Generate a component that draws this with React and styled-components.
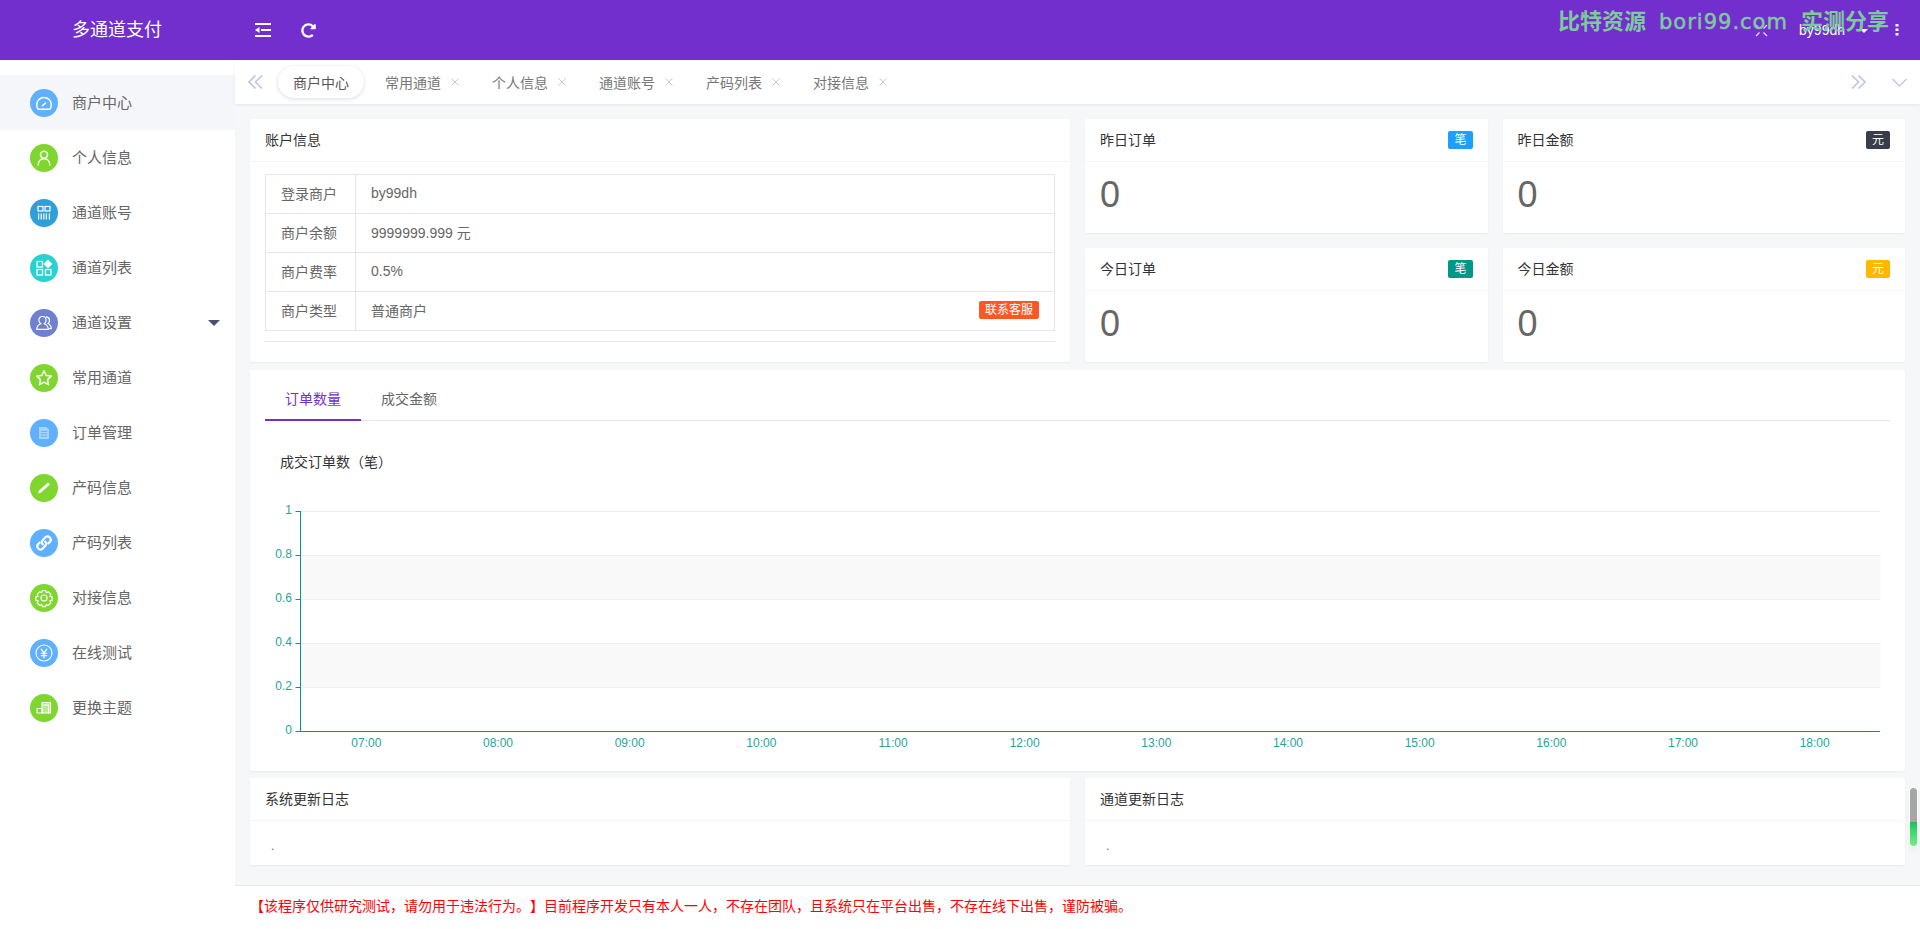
import React from 'react';
import styled, { createGlobalStyle } from 'styled-components';
import { FaRedoAlt } from 'react-icons/fa';

const GlobalStyle = createGlobalStyle`
  html, body {
    margin: 0;
    height: 100%;
    overflow: hidden;
  }
  body {
    font-family: 'Liberation Sans', 'Noto Sans CJK SC', sans-serif;
    font-size: 14px;
    color: #666;
    background: #f5f7f9;
    text-spacing-trim: space-all;
  }
  * {
    box-sizing: border-box;
  }
`;

const Page = styled.div`
  position: relative;
  height: 929px;
  display: flex;
  flex-direction: column;
`;

const Header = styled.header`
  height: 60px;
  flex: none;
  display: flex;
  align-items: center;
  background: #722fcd;
  color: #fff;
`;

const Logo = styled.div`
  width: 235px;
  padding-left: 72px;
  font-size: 18px;
  line-height: 60px;
`;

const HeaderTool = styled.div`
  display: flex;
  align-items: center;
  margin-left: ${({ $left }) => $left}px;
  height: 16px;
`;

const HeaderRight = styled.div`
  margin-left: auto;
  padding: 0 21px 0 0;
  height: 60px;
  display: flex;
  align-items: center;
  font-size: 14px;
`;

const UserName = styled.span`
  margin-left: 31px;
  line-height: 60px;
`;

const UserCaret = styled.span`
  width: 0;
  height: 0;
  margin: 2px 27px 0 15px;
  border-style: solid;
  border-width: 4px 4px 0;
  border-color: #fff transparent transparent;
`;

const Watermark = styled.div`
  position: absolute;
  left: 1558px;
  top: 8px;
  display: flex;
  gap: 13px;
  font-family: 'DejaVu Sans', 'Noto Sans CJK SC', sans-serif;
  font-weight: 700;
  font-size: 22px;
  line-height: 28px;
  color: #7fc99f;
  white-space: nowrap;
`;

const WatermarkLatin = styled.span`
  font-size: 21px;
  font-weight: 400;
  -webkit-text-stroke: 0.5px #7fc99f;
  letter-spacing: 1px;
`;

const Body = styled.div`
  flex: 1;
  display: flex;
  min-height: 0;
`;

const Sidebar = styled.aside`
  width: 235px;
  flex: none;
  padding-top: 15px;
  background: #fff;
`;

const MenuItem = styled.div`
  height: 55px;
  display: flex;
  align-items: center;
  gap: 14px;
  padding: 0 15px 0 30px;
  font-size: 15px;
  color: #666;
  background: ${({ $active }) => ($active ? '#f5f6fa' : 'transparent')};
`;

const MenuLabel = styled.span`
  padding-bottom: 2px;
`;

const MenuIcon = styled.span`
  width: 28px;
  height: 28px;
  flex: none;
  border-radius: 50%;
  background: ${({ $bg }) => $bg};
  display: flex;
`;

const MenuCaret = styled.span`
  margin-left: auto;
  width: 0;
  height: 0;
  border-style: solid;
  border-width: 6px 6px 0;
  border-color: #4a5170 transparent transparent;
`;

const Main = styled.main`
  flex: 1;
  min-width: 0;
  display: flex;
  flex-direction: column;
`;

const TabBar = styled.div`
  height: 44px;
  flex: none;
  padding: 0 13px;
  display: flex;
  align-items: center;
  background: #fff;
  box-shadow: 0 1px 3px rgba(0, 0, 0, 0.07);
`;

const PageTab = styled.div`
  display: flex;
  align-items: center;
  gap: 9px;
  height: 32px;
  padding-bottom: 1px;
  ${({ $active }) => ($active
    ? `
    margin: 0 5px 0 15px;
    padding-left: 15px;
    padding-right: 15px;
    border-radius: 16px;
    color: #555;
    background: #fff;
    box-shadow: 0 1px 4px rgba(0, 0, 0, 0.14);
  `
    : `
    padding-left: 16px;
    padding-right: 16px;
    color: #777;
  `)}
`;

const TabBarEnd = styled.div`
  margin-left: auto;
  display: flex;
  align-items: center;
  gap: 26px;
`;

const Content = styled.div`
  flex: 1;
  min-height: 0;
  padding: 15px 15px 0;
`;

const TopGrid = styled.div`
  display: grid;
  grid-template-columns: 820px 1fr 1fr;
  grid-template-rows: 114px 114px;
  gap: 15px;
  margin-bottom: 8px;
`;

const Card = styled.section`
  background: #fff;
  border-radius: 2px;
  box-shadow: 0 1px 2px rgba(0, 0, 0, 0.05);
  ${({ $tall }) => $tall && 'grid-row: span 2;'}
`;

const CardHeader = styled.div`
  height: 43px;
  padding: 0 15px;
  display: flex;
  align-items: center;
  justify-content: space-between;
  color: #333;
  border-bottom: 1px solid #f6f6f6;
`;

const CardTitle = styled.span`
  padding-bottom: 2px;
`;

const UnitBadge = styled.span`
  height: 18px;
  padding: 0 6px;
  border-radius: 2px;
  font-size: 12px;
  line-height: 18px;
  color: #fff;
  background: ${({ $bg }) => $bg};
`;

const StatValue = styled.div`
  padding: 9px 15px 0;
  font-size: 36px;
  line-height: 48px;
  color: #666;
`;

const InfoBody = styled.div`
  padding: 12px 15px 0;
`;

const InfoTable = styled.table`
  width: 100%;
  border-collapse: collapse;
  table-layout: fixed;
  color: #666;

  td {
    height: 39px;
    padding: 0 15px 2px;
    border: 1px solid #e6e6e6;
  }
  td:first-child {
    width: 90px;
  }
`;

const ValueRow = styled.div`
  display: flex;
  align-items: center;
  justify-content: space-between;
`;

const ContactBadge = styled.span`
  height: 18px;
  padding: 0 6px;
  border-radius: 2px;
  font-size: 12px;
  line-height: 18px;
  color: #fff;
  background: #ff5722;
`;

const Rule = styled.hr`
  height: 1px;
  margin: 10px 0 0;
  border: 0;
  background: #e6e6e6;
`;

const ChartCard = styled(Card)`
  height: 401px;
  padding: 11px 15px 0;
  margin-bottom: 7px;
`;

const ChartTabs = styled.div`
  height: 40px;
  display: flex;
  border-bottom: 1px solid #e6e6e6;
`;

const ChartTab = styled.div`
  height: 40px;
  padding: 0 20px;
  line-height: 36px;
  color: ${({ $active }) => ($active ? '#722fcd' : '#666')};
  border-bottom: 2px solid ${({ $active }) => ($active ? '#722fcd' : 'transparent')};
`;

const ChartTitle = styled.div`
  padding: 31px 0 0 15px;
  line-height: 20px;
  color: #333;
`;

const ChartSvg = styled.svg`
  display: block;
  margin-top: 20px;
  font-family: 'Liberation Sans', sans-serif;
  font-size: 12px;
`;

const BottomGrid = styled.div`
  display: grid;
  grid-template-columns: 1fr 1fr;
  gap: 15px;
`;

const LogCard = styled(Card)`
  height: 87px;
`;

const LogBody = styled.div`
  padding: 15px 21px 0;
  font-size: 12px;
  line-height: 20px;
  color: #666;
`;

const Footer = styled.footer`
  height: 44px;
  flex: none;
  padding-left: 15px;
  line-height: 40px;
  color: #f00;
  background: #fff;
  border-top: 1px solid #e9e9e9;
`;

const ScrollPill = styled.div`
  position: absolute;
  left: 1910px;
  top: 788px;
  width: 7px;
  height: 58px;
  border-radius: 4px;
  background: linear-gradient(
    #a6a6a6 0,
    #a6a6a6 34px,
    #1fb95a 34px,
    #2ed36b 40px,
    #74ee86 58px
  );
  box-shadow: 0 0 0 1px #fff, 0 4px 6px rgba(0, 0, 0, 0.06);
`;

const Glyph = ({ children, fill = 'none' }) => (
  <svg width="28" height="28" viewBox="0 0 28 28" fill={fill} stroke="#fff" strokeWidth="1.5" strokeLinecap="round" strokeLinejoin="round">
    {children}
  </svg>
);

const menu = [
  {
    label: '商户中心',
    bg: '#5fb0ff',
    active: true,
    icon: (
      <Glyph>
        <path d="M8.2 20.2a7.3 7.3 0 1 1 11.6 0z" />
        <path d="M12.6 16.6l3-2.6" />
      </Glyph>
    ),
  },
  {
    label: '个人信息',
    bg: '#7ed62f',
    icon: (
      <Glyph>
        <circle cx="14" cy="10.8" r="3.5" />
        <path d="M8.2 21c0-3.8 2.4-6.2 5.8-6.2s5.8 2.4 5.8 6.2" />
      </Glyph>
    ),
  },
  {
    label: '通道账号',
    bg: '#2e9fd8',
    icon: (
      <Glyph>
        <g strokeWidth="1.2" strokeLinecap="butt" strokeLinejoin="miter">
          <rect x="8" y="7.5" width="5" height="4.5" />
          <rect x="15" y="7.5" width="5" height="4.5" />
          <path d="M8.6 14.5v6M11.2 14.5v6M13.8 14.5v6M16.4 14.5v6M19.4 14.5v6" />
        </g>
      </Glyph>
    ),
  },
  {
    label: '通道列表',
    bg: '#2ad1d1',
    icon: (
      <Glyph>
        <g strokeWidth="1.3" strokeLinejoin="miter">
          <rect x="7" y="7.5" width="5.5" height="5.5" />
          <rect x="7" y="15.5" width="5.5" height="5.5" />
          <rect x="15.5" y="15.5" width="5.5" height="5.5" />
          <path d="M18 6.5l3.4 3.4-3.4 3.4-3.4-3.4z" fill="#fff" />
        </g>
      </Glyph>
    ),
  },
  {
    label: '通道设置',
    bg: '#6f80cf',
    caret: true,
    icon: (
      <Glyph>
        <g strokeWidth="1.2">
          <path d="M12.5 7.5c-2.2 0-3.6 1.7-3.6 3.8 0 1.6.8 2.9 2 3.5-2.6.8-4 2.5-4.2 5.6h11.6c-.2-3.1-1.6-4.8-4.2-5.6 1.2-.6 2-1.9 2-3.5 0-2.1-1.4-3.8-3.6-3.8z" />
          <path d="M16.5 7.8c1.8.2 3 1.7 3 3.6 0 1.3-.6 2.4-1.6 3.1 2.2.9 3.3 2.6 3.4 5.1h-2" />
        </g>
      </Glyph>
    ),
  },
  {
    label: '常用通道',
    bg: '#7ed62f',
    icon: (
      <Glyph>
        <path d="M14 6.8l2.2 4.7 5 .6-3.7 3.5 1 5.1-4.5-2.5-4.5 2.5 1-5.1-3.7-3.5 5-.6z" />
      </Glyph>
    ),
  },
  {
    label: '订单管理',
    bg: '#5fb0ff',
    icon: (
      <svg width="28" height="28" viewBox="0 0 28 28">
        <path d="M9 8h7.4l2.6 2.6V20H9z" fill="#a9d4ff" />
        <path d="M10.8 12.4h6.4M10.8 14.8h6.4M10.8 17.2h6.4" stroke="#5fb0ff" />
      </svg>
    ),
  },
  {
    label: '产码信息',
    bg: '#7ed62f',
    icon: (
      <svg width="28" height="28" viewBox="0 0 28 28">
        <path d="M18 8.4l2 2-9 8.2-3 1 1-3z" fill="#fff" />
      </svg>
    ),
  },
  {
    label: '产码列表',
    bg: '#5fb0ff',
    icon: (
      <Glyph>
        <g strokeWidth="2.2">
          <path d="M12.8 15.4a3.2 3.2 0 0 1 0-4.5l2.7-2.7a3.2 3.2 0 0 1 4.5 4.5l-1.7 1.7" />
          <path d="M15.2 12.6a3.2 3.2 0 0 1 0 4.5l-2.7 2.7a3.2 3.2 0 0 1-4.5-4.5l1.7-1.7" />
        </g>
      </Glyph>
    ),
  },
  {
    label: '对接信息',
    bg: '#7ed62f',
    icon: (
      <Glyph>
        <g strokeWidth="1.2">
          <circle cx="14" cy="14" r="3" />
          <path d="M12.3 6.5h3.4l.6 2.2 2.1-.9 2.4 2.4-.9 2.1 2.2.6v3.4l-2.2.6.9 2.1-2.4 2.4-2.1-.9-.6 2.2h-3.4l-.6-2.2-2.1.9-2.4-2.4.9-2.1-2.2-.6v-3.4l2.2-.6-.9-2.1 2.4-2.4 2.1.9z" />
        </g>
      </Glyph>
    ),
  },
  {
    label: '在线测试',
    bg: '#5fb0ff',
    icon: (
      <Glyph>
        <circle cx="14" cy="14" r="8" strokeWidth="1.1" />
        <path d="M11.2 10.2l2.8 3.6 2.8-3.6M14 13.8v5M11.4 14.4h5.2M11.4 16.6h5.2" strokeWidth="1.3" />
      </Glyph>
    ),
  },
  {
    label: '更换主题',
    bg: '#7ed62f',
    icon: (
      <Glyph>
        <g strokeWidth="1.1">
          <path d="M12 11V8.5h8.5V19h-2" fill="#b8ec87" />
          <rect x="12" y="11" width="6.5" height="8" fill="#b8ec87" />
          <rect x="7" y="14.5" width="5" height="4.5" />
        </g>
      </Glyph>
    ),
  },
];

const CloseMark = () => (
  <svg width="10" height="10" viewBox="0 0 10 10" stroke="#c9c9c9" strokeWidth="1">
    <path d="M1.5 1.5l7 7M8.5 1.5l-7 7" />
  </svg>
);

const DoubleChevron = ({ flip }) => (
  <svg width="15" height="14" viewBox="0 0 15 14" fill="none" stroke="#c0c8e4" strokeWidth="1.7" style={flip ? { transform: 'scaleX(-1)' } : undefined}>
    <path d="M7.5 0.5L1 7l6.5 6.5M14 0.5L7.5 7l6.5 6.5" />
  </svg>
);

const tabs = ['常用通道', '个人信息', '通道账号', '产码列表', '对接信息'];

const ticks = [
  { label: '1', y: 511 },
  { label: '0.8', y: 555 },
  { label: '0.6', y: 599 },
  { label: '0.4', y: 643 },
  { label: '0.2', y: 687 },
  { label: '0', y: 731 },
];

const hours = ['07:00', '08:00', '09:00', '10:00', '11:00', '12:00', '13:00', '14:00', '15:00', '16:00', '17:00', '18:00'];

// chart coordinates are page y minus the top of the svg
const CHART_TOP = 492;
const AXIS_X = 35.5;
const STEP_X = 1580 / 12;

const OrdersChart = () => (
  <ChartSvg width="1625" height="262" viewBox="0 0 1625 262">
    <rect x={AXIS_X} y={555 - CHART_TOP} width="1580" height="44" fill="#f9f9f9" />
    <rect x={AXIS_X} y={643 - CHART_TOP} width="1580" height="44" fill="#f9f9f9" />
    {ticks.map(({ label, y }) => (
      <g key={label}>
        {label !== '0' && <line x1={AXIS_X} x2="1615" y1={y - CHART_TOP + 0.5} y2={y - CHART_TOP + 0.5} stroke="#eee" />}
        <line x1={AXIS_X - 5} x2={AXIS_X} y1={y - CHART_TOP + 0.5} y2={y - CHART_TOP + 0.5} stroke="#009688" />
        <text x={AXIS_X - 8.5} y={y - CHART_TOP + 3} textAnchor="end" fill="#1fa595">{label}</text>
      </g>
    ))}
    <line x1={AXIS_X} x2={AXIS_X} y1={511 - CHART_TOP} y2={731 - CHART_TOP + 1} stroke="#009688" />
    <line x1={AXIS_X} x2="1615" y1={731 - CHART_TOP + 0.5} y2={731 - CHART_TOP + 0.5} stroke="#009688" />
    {hours.map((hour, i) => (
      <text key={hour} x={AXIS_X + STEP_X * (i + 0.5)} y={747 - CHART_TOP} textAnchor="middle" fill="#1fa595">{hour}</text>
    ))}
  </ChartSvg>
);

const stats = [
  { title: '昨日订单', unit: '笔', bg: '#1e9fff' },
  { title: '昨日金额', unit: '元', bg: '#393d49' },
  { title: '今日订单', unit: '笔', bg: '#009688' },
  { title: '今日金额', unit: '元', bg: '#ffb800' },
];

const App = () => (
  <Page>
    <GlobalStyle />
    <Header>
      <Logo>多通道支付</Logo>
      <HeaderTool $left={20}>
        <svg width="16" height="14" viewBox="0 0 16 14" fill="#fff">
          <rect width="16" height="2" />
          <rect x="6" y="6" width="10" height="2" />
          <rect y="12" width="16" height="2" />
          <path d="M4.5 4v6L0 7z" />
        </svg>
      </HeaderTool>
      <HeaderTool $left={30}>
        <FaRedoAlt size={15} />
      </HeaderTool>
      <HeaderRight>
        <svg width="13" height="13" viewBox="0 0 13 13" fill="none" stroke="#e9dcfa" strokeWidth="1.3">
          <path d="M1 1l3.5 3.5M12 1L8.5 4.5M1 12l3.500-3.500M12 12L8.500 8.500" />
        </svg>
        <UserName>by99dh</UserName>
        <UserCaret />
        <svg width="4" height="12" viewBox="0 0 4 12" fill="#fff">
          <rect x="0.5" width="3" height="2.5" />
          <rect x="0.5" y="4.5" width="3" height="2.5" />
          <rect x="0.5" y="9" width="3" height="2.5" />
        </svg>
      </HeaderRight>
    </Header>
    <Watermark>
      <span>比特资源</span>
      <WatermarkLatin>bori99.com</WatermarkLatin>
      <span>实测分享</span>
    </Watermark>
    <Body>
      <Sidebar>
        {menu.map((item) => (
          <MenuItem key={item.label} $active={item.active}>
            <MenuIcon $bg={item.bg}>{item.icon}</MenuIcon>
            <MenuLabel>{item.label}</MenuLabel>
            {item.caret && <MenuCaret />}
          </MenuItem>
        ))}
      </Sidebar>
      <Main>
        <TabBar>
          <DoubleChevron />
          <PageTab $active>商户中心</PageTab>
          {tabs.map((tab) => (
            <PageTab key={tab}>
              {tab}
              <CloseMark />
            </PageTab>
          ))}
          <TabBarEnd>
            <DoubleChevron flip />
            <svg width="15" height="9" viewBox="0 0 15 9" fill="none" stroke="#c0c8e4" strokeWidth="1.3">
              <path d="M0.5 1l7 7 7-7" />
            </svg>
          </TabBarEnd>
        </TabBar>
        <Content>
          <TopGrid>
            <Card $tall>
              <CardHeader><CardTitle>账户信息</CardTitle></CardHeader>
              <InfoBody>
                <InfoTable>
                  <tbody>
                    <tr><td>登录商户</td><td>by99dh</td></tr>
                    <tr><td>商户余额</td><td>9999999.999 元</td></tr>
                    <tr><td>商户费率</td><td>0.5%</td></tr>
                    <tr>
                      <td>商户类型</td>
                      <td>
                        <ValueRow>
                          普通商户
                          <ContactBadge>联系客服</ContactBadge>
                        </ValueRow>
                      </td>
                    </tr>
                  </tbody>
                </InfoTable>
                <Rule />
              </InfoBody>
            </Card>
            {stats.map((stat) => (
              <Card key={stat.title}>
                <CardHeader>
                  <CardTitle>{stat.title}</CardTitle>
                  <UnitBadge $bg={stat.bg}>{stat.unit}</UnitBadge>
                </CardHeader>
                <StatValue>0</StatValue>
              </Card>
            ))}
          </TopGrid>
          <ChartCard>
            <ChartTabs>
              <ChartTab $active>订单数量</ChartTab>
              <ChartTab>成交金额</ChartTab>
            </ChartTabs>
            <ChartTitle>成交订单数（笔）</ChartTitle>
            <OrdersChart />
          </ChartCard>
          <BottomGrid>
            <LogCard>
              <CardHeader><CardTitle>系统更新日志</CardTitle></CardHeader>
              <LogBody>.</LogBody>
            </LogCard>
            <LogCard>
              <CardHeader><CardTitle>通道更新日志</CardTitle></CardHeader>
              <LogBody>.</LogBody>
            </LogCard>
          </BottomGrid>
        </Content>
        <Footer>【该程序仅供研究测试，请勿用于违法行为。】目前程序开发只有本人一人，不存在团队，且系统只在平台出售，不存在线下出售，谨防被骗。</Footer>
      </Main>
    </Body>
    <ScrollPill />
  </Page>
);

export default App;
